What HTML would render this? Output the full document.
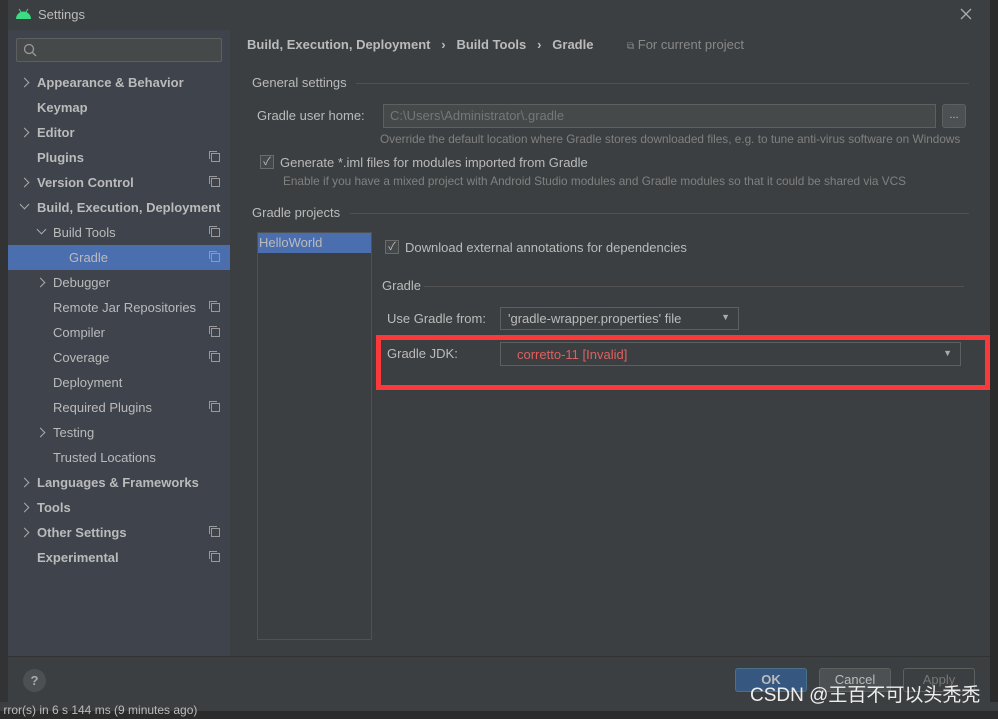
<!DOCTYPE html><html><head><style>
*{margin:0;padding:0;box-sizing:border-box}
body{width:998px;height:711px;background:#2b2b2b;font-family:"Liberation Sans","Noto Sans CJK SC",sans-serif;font-size:13px;color:#bbbbbb;position:relative;overflow:hidden}
.a{position:absolute;white-space:nowrap}
.dlg{position:absolute;left:8px;top:0;width:982px;height:702px;background:#3c3f41}
.side{position:absolute;left:8px;top:30px;width:222px;height:626px;background:#3e434c}
.r{position:absolute;left:8px;width:222px;height:25px;line-height:25px}
.b{font-weight:bold}
.chev{position:absolute;left:13px;top:9px;width:7px;height:7px;border-right:1.3px solid #aaa;border-top:1.3px solid #aaa;transform:rotate(45deg)}
.chev.d{transform:rotate(135deg);top:6px}
.ic{position:absolute;right:10px;top:8px;width:9px;height:9px;border:1px solid #999}
.ic:before{content:"";position:absolute;left:-3px;top:-3px;width:7px;height:7px;border-left:1px solid #999;border-top:1px solid #999}
.line{position:absolute;height:1px;background:#515151}
.gray{color:#808080;font-size:11.8px}
.cb{position:absolute;width:14px;height:14px;border:1px solid #6b6b6b;background:#43494a;color:#bbb;font-size:11px;line-height:12px;text-align:center}
</style></head><body>
<div class="a" style="left:0;top:0;width:8px;height:711px;background:#313335"></div>
<div class="a" style="left:0;top:702px;width:998px;height:9px;background:#3c3f41;font-size:12px;color:#bbb;line-height:17px">&nbsp;rror(s) in 6 s 144 ms (9 minutes ago)</div>
<div class="dlg"></div>
<svg class="a" style="left:15px;top:8px" width="17" height="12"><path d="M1 11 A7.5 7.5 0 0 1 16 11Z" fill="#3ddc84"/><line x1="4" y1="1" x2="6" y2="4" stroke="#3ddc84"/><line x1="13" y1="1" x2="11" y2="4" stroke="#3ddc84"/></svg>
<div class="a" style="left:38px;top:7px;color:#bbb">Settings</div>
<svg class="a" style="left:960px;top:8px" width="12" height="12"><path d="M1 1L11 11M11 1L1 11" stroke="#aaa" stroke-width="1.3"/></svg>
<div class="side"></div>
<div class="a" style="left:16px;top:38px;width:206px;height:24px;border:1px solid #5e6060;background:#45494a;border-radius:2px"></div>
<svg class="a" style="left:23px;top:43px" width="14" height="14"><circle cx="6" cy="6" r="4.5" stroke="#999" fill="none" stroke-width="1.3"/><line x1="9.5" y1="9.5" x2="13" y2="13" stroke="#999" stroke-width="1.3"/></svg>
<div class="r b" style="top:70px"><span class="chev"></span><span style="margin-left:29px">Appearance &amp; Behavior</span></div>
<div class="r b" style="top:95px"><span style="margin-left:29px">Keymap</span></div>
<div class="r b" style="top:120px"><span class="chev"></span><span style="margin-left:29px">Editor</span></div>
<div class="r b" style="top:145px"><span style="margin-left:29px">Plugins</span><i class="ic"></i></div>
<div class="r b" style="top:170px"><span class="chev"></span><span style="margin-left:29px">Version Control</span><i class="ic"></i></div>
<div class="r b" style="top:195px"><span class="chev d"></span><span style="margin-left:29px">Build, Execution, Deployment</span></div>
<div class="r" style="top:220px"><span class="chev d" style="left:30px"></span><span style="margin-left:45px">Build Tools</span><i class="ic"></i></div>
<div class="r" style="top:245px;background:#4b6eaf"><span style="margin-left:61px">Gradle</span><i class="ic"></i></div>
<div class="r" style="top:270px"><span class="chev" style="left:29px"></span><span style="margin-left:45px">Debugger</span></div>
<div class="r" style="top:295px"><span style="margin-left:45px">Remote Jar Repositories</span><i class="ic"></i></div>
<div class="r" style="top:320px"><span style="margin-left:45px">Compiler</span><i class="ic"></i></div>
<div class="r" style="top:345px"><span style="margin-left:45px">Coverage</span><i class="ic"></i></div>
<div class="r" style="top:370px"><span style="margin-left:45px">Deployment</span></div>
<div class="r" style="top:395px"><span style="margin-left:45px">Required Plugins</span><i class="ic"></i></div>
<div class="r" style="top:420px"><span class="chev" style="left:29px"></span><span style="margin-left:45px">Testing</span></div>
<div class="r" style="top:445px"><span style="margin-left:45px">Trusted Locations</span></div>
<div class="r b" style="top:470px"><span class="chev"></span><span style="margin-left:29px">Languages &amp; Frameworks</span></div>
<div class="r b" style="top:495px"><span class="chev"></span><span style="margin-left:29px">Tools</span></div>
<div class="r b" style="top:520px"><span class="chev"></span><span style="margin-left:29px">Other Settings</span><i class="ic"></i></div>
<div class="r b" style="top:545px"><span style="margin-left:29px">Experimental</span><i class="ic"></i></div>

<div class="a b" style="left:247px;top:37px">Build, Execution, Deployment &nbsp;&nbsp;›&nbsp;&nbsp; Build Tools &nbsp;&nbsp;›&nbsp;&nbsp; Gradle</div>
<div class="a" style="left:627px;top:37px;color:#888"><span style="font-size:10px">⧉</span> For current project</div>

<div class="a" style="left:252px;top:75px">General settings</div>
<div class="line" style="left:356px;top:83px;width:613px"></div>
<div class="a" style="left:257px;top:108px">Gradle user home:</div>
<div class="a" style="left:383px;top:104px;width:553px;height:24px;border:1px solid #5e6060;background:#45494a;color:#777;padding:3px 6px">C:\Users\Administrator\.gradle</div>
<div class="a" style="left:942px;top:104px;width:24px;height:24px;border:1px solid #5e6060;background:#4c5052;border-radius:3px;text-align:center;font-size:11px;line-height:20px">...</div>
<div class="a gray" style="left:380px;top:132px">Override the default location where Gradle stores downloaded files, e.g. to tune anti-virus software on Windows</div>
<div class="cb" style="left:260px;top:155px">✓</div>
<div class="a" style="left:280px;top:155px">Generate *.iml files for modules imported from Gradle</div>
<div class="a gray" style="left:283px;top:174px">Enable if you have a mixed project with Android Studio modules and Gradle modules so that it could be shared via VCS</div>

<div class="a" style="left:252px;top:205px">Gradle projects</div>
<div class="line" style="left:350px;top:213px;width:619px"></div>
<div class="a" style="left:257px;top:232px;width:115px;height:408px;border:1px solid #4f5254"></div>
<div class="a" style="left:258px;top:233px;width:113px;height:20px;background:#4b6eaf;padding:2px 1px">HelloWorld</div>
<div class="cb" style="left:385px;top:240px">✓</div>
<div class="a" style="left:405px;top:240px">Download external annotations for dependencies</div>
<div class="a" style="left:382px;top:278px">Gradle</div>
<div class="line" style="left:424px;top:286px;width:540px"></div>
<div class="a" style="left:387px;top:311px">Use Gradle from:</div>
<div class="a" style="left:500px;top:307px;width:239px;height:23px;border:1px solid #5e6060;background:#3c3f41;padding:3px 7px">'gradle-wrapper.properties' file<span style="position:absolute;right:8px;top:4px;font-size:9px;color:#aaa">▼</span></div>
<div class="a" style="left:376px;top:335px;width:614px;height:55px;border:5px solid #fa3a3a"></div>
<div class="a" style="left:387px;top:346px">Gradle JDK:</div>
<div class="a" style="left:500px;top:342px;width:461px;height:24px;border:1px solid #5e6060;background:#3c3f41;padding:4px 16px;color:#e06060">corretto-11 [Invalid]<span style="position:absolute;right:8px;top:5px;font-size:9px;color:#aaa">▼</span></div>

<div class="line" style="left:8px;top:656px;width:982px;background:#323232"></div>
<div class="a" style="left:23px;top:669px;width:23px;height:23px;border-radius:50%;background:#4c5052;text-align:center;line-height:23px;font-weight:bold;color:#aaa">?</div>
<div class="a" style="left:735px;top:668px;width:72px;height:24px;background:#365880;border:1px solid #4c708c;border-radius:3px;text-align:center;line-height:22px;font-weight:bold">OK</div>
<div class="a" style="left:819px;top:668px;width:72px;height:24px;background:#4c5052;border:1px solid #5e6060;border-radius:3px;text-align:center;line-height:22px">Cancel</div>
<div class="a" style="left:903px;top:668px;width:72px;height:24px;border:1px solid #5e6060;border-radius:3px;text-align:center;line-height:22px;color:#777">Apply</div>
<div class="a" style="left:750px;top:680px;font-size:19px;color:#eee">CSDN @王百不可以头秃秃</div>
</body></html>
